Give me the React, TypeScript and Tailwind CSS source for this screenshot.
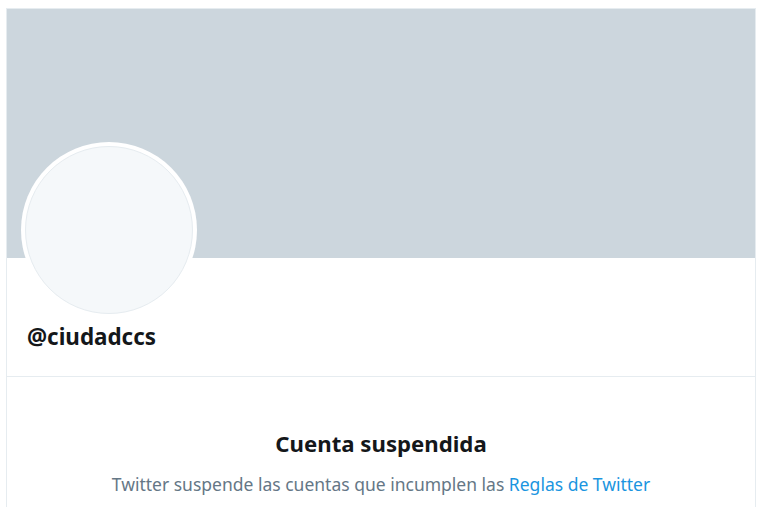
import React from 'react';

const font = { fontFamily: '"Noto Sans", "Open Sans", sans-serif' };

const App: React.FC = () => {
    return (
        <div className="w-[767px] h-[507px] bg-white overflow-hidden pt-[8px]" style={font}>
            <div className="ml-[6px] w-[750px] border-x border-t border-[#e6ecf0] h-[600px]">
                {/* Banner */}
                <div className="h-[249px] bg-[#ccd6dd]" />

                {/* Avatar + handle */}
                <div className="px-[14px]">
                    <div className="-mt-[116px] w-[176px] h-[176px] rounded-full bg-white p-[4px]">
                        <div className="w-full h-full rounded-full bg-[#f5f8fa] border border-[#e6ecf0]" />
                    </div>
                    <div className="pl-[6px] pt-[4px] pb-[24px] text-[22.4px] font-bold leading-[30px] text-[#14171a]">
                        @ciudadccs
                    </div>
                </div>

                <div className="border-t border-[#e6ecf0] flex flex-col items-center pt-[52px]">
                    <h2 className="text-[22.2px] font-bold leading-[30px] text-[#14171a]">Cuenta suspendida</h2>
                    <p className="mt-[14px] text-[17.5px] leading-[22px] text-[#657786]">
                        Twitter suspende las cuentas que incumplen las{' '}
                        <a className="text-[#1b95e0]">Reglas de Twitter</a>
                    </p>
                </div>
            </div>
        </div>
    );
};

export default App;
